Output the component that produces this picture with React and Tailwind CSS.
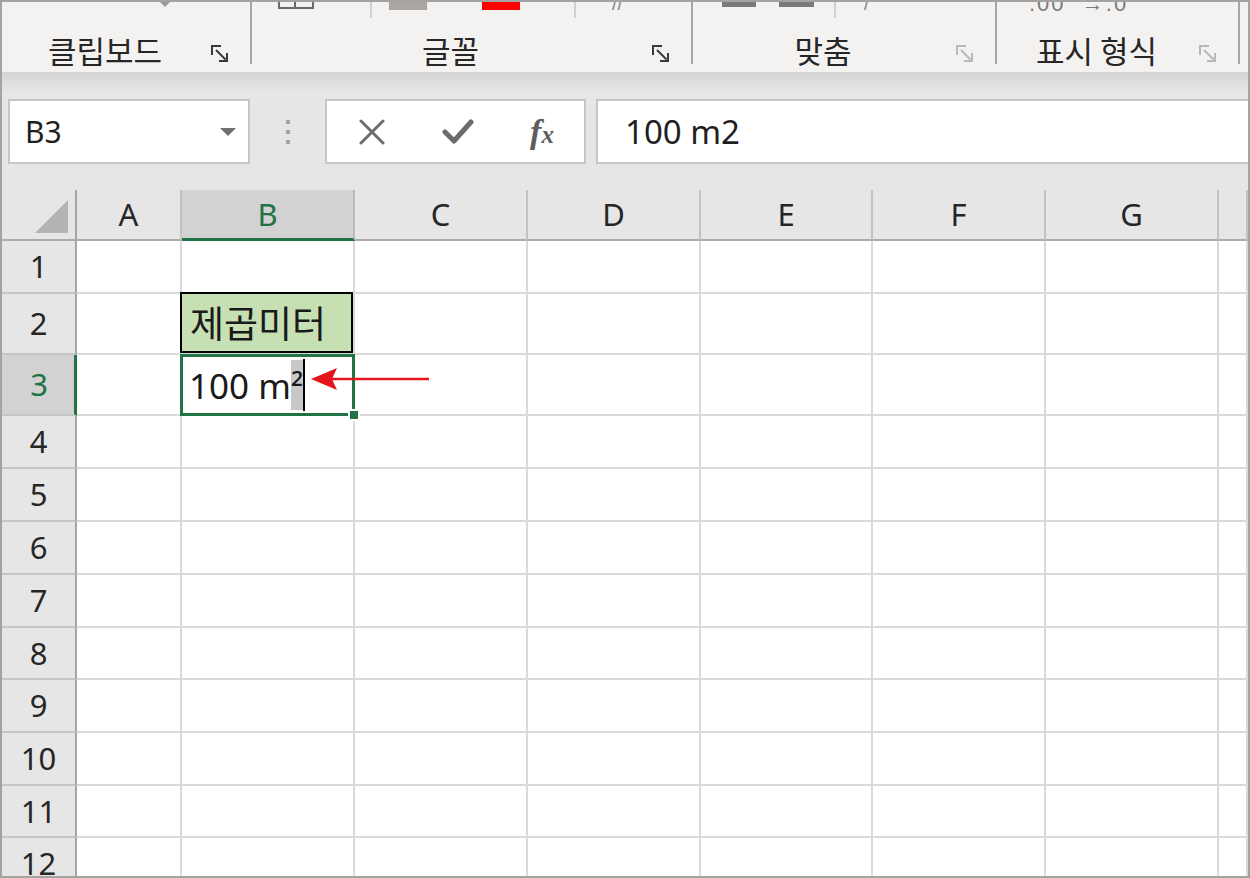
import React from "react";

const GRID = "grid grid-cols-[75px_105px_173px_173px_173px_172px_173px_173px_1fr]";
const COLS = ["A", "B", "C", "D", "E", "F", "G", ""];
const ROWS = [
  {n: 1, h: "h-[53px]"},
  {n: 2, h: "h-[61px]"},
  {n: 3, h: "h-[61px]"},
  {n: 4, h: "h-[53px]"},
  {n: 5, h: "h-[53px]"},
  {n: 6, h: "h-[53px]"},
  {n: 7, h: "h-[53px]"},
  {n: 8, h: "h-[52px]"},
  {n: 9, h: "h-[53px]"},
  {n: 10, h: "h-[53px]"},
  {n: 11, h: "h-[52px]"},
  {n: 12, h: "h-[53px]"},
];

// dialog box launcher in the ribbon group corner
const Launcher = ({light}) => (
  <svg width="20" height="20" viewBox="0 0 20 20" fill="none" stroke={light ? "#b8b8b8" : "#3a3a3a"} strokeWidth="2">
    <path d="M2 11V2h9" />
    <path d="M6 6l9.5 9.5" />
    <path d="M17 9v8H9" />
  </svg>
);

const GroupSep = () => <div className="w-[2px] h-[62px] bg-[#a8a6a4] shrink-0" />;

const Group = ({width, label, light, children}) => (
  <div className={`${width} shrink-0 flex flex-col`}>
    <div className="h-[28px] flex items-start overflow-hidden">{children}</div>
    <div className="h-[42px] flex items-center">
      <div className="flex-1 text-center text-[31px] leading-none text-[#262626] -mt-[4px]">{label}</div>
      <div className="w-[42px] flex items-center justify-start pl-[2px] pt-[6px]">
        <Launcher light={light} />
      </div>
    </div>
  </div>
);

const Ribbon = () => (
  <div className="h-[70px] bg-[#f3f2f1] flex font-['Noto_Sans_CJK_KR',sans-serif]">
    <Group width="w-[248px]" label="클립보드">
      <div className="ml-[158px] w-0 h-0 border-l-[5px] border-r-[5px] border-t-[5px] border-l-transparent border-r-transparent border-t-[#9a9a9a]" />
    </Group>
    <GroupSep />
    <Group width="w-[439px]" label="글꼴">
      <div className="ml-[26px] w-[36px] h-[7px] border-2 border-t-0 border-[#6a6a6a] flex">
        <div className="w-1/2 border-r-2 border-[#6a6a6a]" />
      </div>
      <div className="ml-[56px] w-[2px] h-[16px] bg-[#cfcfcf]" />
      <div className="ml-[17px] w-[38px] h-[8px] bg-[#a9a5a1]" />
      <div className="ml-[55px] w-[38px] h-[8px] bg-[#ff0000]" />
      <div className="ml-[54px] w-[2px] h-[16px] bg-[#cfcfcf]" />
      <div className="ml-[36px] -mt-[14px] text-[20px] text-[#8a8a8a] font-['Liberation_Sans',sans-serif]">//</div>
    </Group>
    <GroupSep />
    <Group width="w-[302px]" label="맞춤" light>
      <div className="ml-[29px] w-[34px] h-[5px] bg-[#7a7a7a]" />
      <div className="ml-[23px] w-[35px] h-[5px] bg-[#7a7a7a]" />
      <div className="ml-[20px] w-[2px] h-[16px] bg-[#cfcfcf]" />
      <div className="ml-[28px] -mt-[14px] text-[20px] text-[#8a8a8a] font-['Liberation_Sans',sans-serif]">/</div>
    </Group>
    <GroupSep />
    <Group width="w-[241px]" label="표시 형식" light>
      <div className="ml-[32px] -mt-[15px] text-[22px] tracking-[2px] text-[#7a7a7a] font-['Liberation_Sans',sans-serif] whitespace-nowrap">
        .00 &nbsp;→.0
      </div>
    </Group>
    <GroupSep />
  </div>
);

const FormulaBar = () => (
  <div className="flex items-start pt-[7px] pb-[26px] overflow-hidden">
    <div className="ml-[6px] w-[242px] h-[65px] shrink-0 bg-white border-2 border-[#c6c6c6] flex items-center pl-[15px] pr-[12px]">
      <span className="flex-1 text-[30px] leading-none text-[#1f1f1f] font-['Noto_Sans',sans-serif]">B3</span>
      <div className="w-0 h-0 border-l-[8px] border-r-[8px] border-t-[8px] border-l-transparent border-r-transparent border-t-[#6e6e6e]" />
    </div>
    <div className="w-[75px] h-[65px] shrink-0 flex flex-col items-center justify-center gap-[6px]">
      <div className="w-[4px] h-[4px] bg-[#a3a3a3]" />
      <div className="w-[4px] h-[4px] bg-[#a3a3a3]" />
      <div className="w-[4px] h-[4px] bg-[#a3a3a3]" />
    </div>
    <div className="w-[261px] h-[65px] shrink-0 bg-white border-2 border-[#c6c6c6] flex items-center">
      <div className="w-[88px] flex justify-center pl-[2px]">
        <svg width="26" height="26" viewBox="0 0 26 26" stroke="#6c6c6c" strokeWidth="3" strokeLinecap="round">
          <path d="M2 2l22 22M24 2L2 24" />
        </svg>
      </div>
      <div className="w-[86px] flex justify-center">
        <svg width="32" height="26" viewBox="0 0 32 26" fill="none" stroke="#6c6c6c" strokeWidth="5" strokeLinecap="round" strokeLinejoin="round">
          <path d="M3 13l9 9L29 3" />
        </svg>
      </div>
      <div className="w-[82px] flex justify-center items-baseline font-['Liberation_Serif',serif] italic font-bold text-[#5c5c5c]">
        <span className="text-[34px] leading-none">f</span>
        <span className="text-[25px] leading-none">x</span>
      </div>
    </div>
    <div className="ml-[10px] w-[700px] h-[65px] shrink-0 bg-white border-2 border-[#c6c6c6] flex items-center pl-[27px]">
      <span className="text-[33px] leading-none text-[#1f1f1f] font-['Noto_Sans',sans-serif]">100 m2</span>
    </div>
  </div>
);

const HeaderRow = () => (
  <div className={`${GRID} h-[51px] font-['Noto_Sans',sans-serif] text-[31px] text-[#262626]`}>
    <div className="border-r-2 border-b-2 border-r-[#a6a6a6] border-b-[#ababab] bg-[#e6e6e6]">
      <svg width="72" height="49" viewBox="0 0 72 49">
        <polygon points="33,43 66,43 66,10" fill="#b4b4b4" />
      </svg>
    </div>
    {COLS.map((c, i) =>
      c === "B" ? (
        <div key={i} className="bg-[#d2d2d2] border-r-2 border-r-[#bcbcbc] border-b-[3px] border-b-[#217346] flex items-center justify-center text-[#217346] leading-none">
          {c}
        </div>
      ) : (
        <div key={i} className="bg-[#e6e6e6] border-r-2 border-r-[#c2c2c2] border-b-2 border-b-[#ababab] flex items-center justify-center leading-none">
          {c}
        </div>
      )
    )}
  </div>
);

const RowHeader = ({n}) =>
  n === 3 ? (
    <div className="bg-[#d2d2d2] border-r-[3px] border-r-[#217346] border-b-2 border-b-[#c6c6c6] flex items-center justify-center text-[#217346] leading-none pl-[2px]">
      {n}
    </div>
  ) : (
    <div className="bg-[#e6e6e6] border-r-2 border-r-[#a6a6a6] border-b-2 border-b-[#c6c6c6] flex items-center justify-center text-[#262626] leading-none">
      {n}
    </div>
  );

const Cell = ({row, col}) => {
  if (row === 2 && col === "B") {
    return (
      <div className="relative bg-[#c6e0b4] border-r-2 border-b-2 border-[#dadada] flex items-center pl-[8px] text-[37px] leading-none text-[#1a1a1a]">
        <div className="absolute -top-[2px] -left-[2px] right-0 bottom-0 border-2 border-black" />
        <span className="relative">제곱미터</span>
      </div>
    );
  }
  if (row === 3 && col === "B") {
    return (
      <div className="relative z-10 bg-white border-r-2 border-b-2 border-[#dadada] flex items-center pl-[7px] text-[35px] leading-none text-[#1a1a1a]">
        <div className="absolute -top-[1px] -left-[2px] -right-[2px] -bottom-[2px] border-[3px] border-[#217346]" />
        <div className="absolute -right-[7px] -bottom-[7px] w-[12px] h-[12px] bg-[#217346] border-2 border-white" />
        <span className="pt-[2px]">100 m</span>
        <span className="h-[50px] bg-[#c8c8c8] flex items-start pt-[10px] text-[35px]">²</span>
        <span className="w-[2px] h-[52px] bg-black" />
        <svg className="absolute left-[129px] top-[12px]" width="120" height="24" viewBox="0 0 120 24">
          <line x1="20" y1="12" x2="118" y2="12" stroke="#e5151d" strokeWidth="2.5" />
          <polygon points="0,12 26,1 21,12 26,23" fill="#e5151d" />
        </svg>
      </div>
    );
  }
  return <div className="bg-white border-r-2 border-b-2 border-[#dadada]" />;
};

export default function App() {
  return (
    <div className="w-[1250px] h-[878px] border-2 border-[#a3a3a3] bg-[#e6e6e6] overflow-hidden">
      <Ribbon />
      <div className="h-[20px] bg-gradient-to-b from-[#d4d4d4] to-[#e6e6e6]" />
      <FormulaBar />
      <div className="font-['Noto_Sans','Noto_Sans_CJK_KR',sans-serif]">
        <HeaderRow />
        {ROWS.map((r) => (
          <div key={r.n} className={`${GRID} ${r.h} text-[31px]`}>
            <RowHeader n={r.n} />
            {COLS.map((c, i) => (
              <Cell key={i} row={r.n} col={c} />
            ))}
          </div>
        ))}
      </div>
    </div>
  );
}
